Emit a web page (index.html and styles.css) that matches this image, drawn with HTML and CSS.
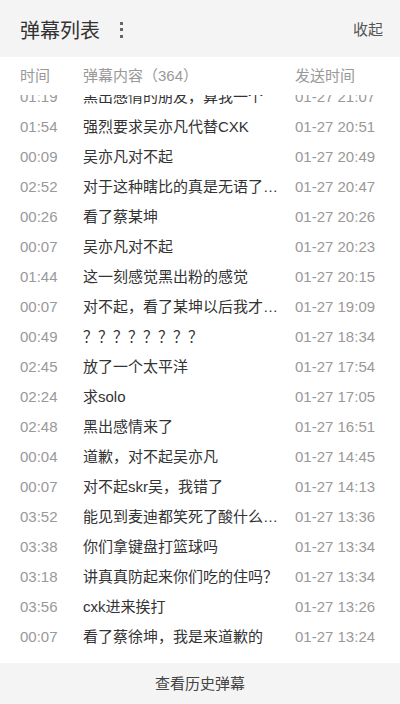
FILE: index.html
```html
<!DOCTYPE html>
<html lang="zh-CN">
<head>
  <meta charset="UTF-8" />
  <meta name="viewport" content="width=device-width, initial-scale=1.0"/>
  <title>弹幕列表</title>
  <link rel="stylesheet" href="styles.css">
</head>
<body>
  <div class="panel">
    <div class="panel-header">
      <div class="title-wrap">
        <span class="title">弹幕列表</span>
        <span class="more"><i></i><i></i><i></i></span>
      </div>
      <span class="fold">收起</span>
    </div>

    <div class="row head">
      <span>时间</span>
      <span class="text">弹幕内容（364）</span>
      <span>发送时间</span>
    </div>

    <div class="list" id="list">
      <div class="list-inner">
        <div class="row"><span class="time">01:19</span><span class="text">黑出感情的朋友，算我一个</span><span class="date">01-27 21:07</span></div>
        <div class="row"><span class="time">01:54</span><span class="text">强烈要求吴亦凡代替CXK</span><span class="date">01-27 20:51</span></div>
        <div class="row"><span class="time">00:09</span><span class="text">吴亦凡对不起</span><span class="date">01-27 20:49</span></div>
        <div class="row"><span class="time">02:52</span><span class="text">对于这种瞎比的真是无语了吧哈哈</span><span class="date">01-27 20:47</span></div>
        <div class="row"><span class="time">00:26</span><span class="text">看了蔡某坤</span><span class="date">01-27 20:26</span></div>
        <div class="row"><span class="time">00:07</span><span class="text">吴亦凡对不起</span><span class="date">01-27 20:23</span></div>
        <div class="row"><span class="time">01:44</span><span class="text">这一刻感觉黑出粉的感觉</span><span class="date">01-27 20:15</span></div>
        <div class="row"><span class="time">00:07</span><span class="text">对不起，看了某坤以后我才知道什么是真爱</span><span class="date">01-27 19:09</span></div>
        <div class="row"><span class="time">00:49</span><span class="text">？？？？？？？？</span><span class="date">01-27 18:34</span></div>
        <div class="row"><span class="time">02:45</span><span class="text">放了一个太平洋</span><span class="date">01-27 17:54</span></div>
        <div class="row"><span class="time">02:24</span><span class="text">求solo</span><span class="date">01-27 17:05</span></div>
        <div class="row"><span class="time">02:48</span><span class="text">黑出感情来了</span><span class="date">01-27 16:51</span></div>
        <div class="row"><span class="time">00:04</span><span class="text">道歉，对不起吴亦凡</span><span class="date">01-27 14:45</span></div>
        <div class="row"><span class="time">00:07</span><span class="text">对不起skr吴，我错了</span><span class="date">01-27 14:13</span></div>
        <div class="row"><span class="time">03:52</span><span class="text">能见到麦迪都笑死了酸什么呢各位</span><span class="date">01-27 13:36</span></div>
        <div class="row"><span class="time">03:38</span><span class="text">你们拿键盘打篮球吗</span><span class="date">01-27 13:34</span></div>
        <div class="row"><span class="time">03:18</span><span class="text">讲真真防起来你们吃的住吗？</span><span class="date">01-27 13:34</span></div>
        <div class="row"><span class="time">03:56</span><span class="text">cxk进来挨打</span><span class="date">01-27 13:26</span></div>
        <div class="row"><span class="time">00:07</span><span class="text">看了蔡徐坤，我是来道歉的</span><span class="date">01-27 13:24</span></div>
      </div>
    </div>

    <div class="panel-footer">查看历史弹幕</div>
  </div>

  <script>
    // scrolled to the end of the list
    const list = document.getElementById('list');
    list.scrollTop = list.scrollHeight;
  </script>
</body>
</html>
```

FILE: styles.css
```css
html, body {
  margin: 0;
  height: 100%;
}

body {
  font-family: "Liberation Sans", "Noto Sans CJK SC", sans-serif;
  background-color: #fff;
  color: #333;
  overflow: hidden;
}

.panel {
  display: flex;
  flex-direction: column;
  height: 100vh;
}

.panel-header {
  flex: 0 0 57px;
  display: flex;
  align-items: center;
  justify-content: space-between;
  padding: 0 17px 0 20px;
  background-color: #f4f4f4;
}

.title-wrap {
  display: flex;
  align-items: center;
  gap: 20px;
}

.title {
  font-size: 20px;
  color: #333;
  padding-top: 2px;
}

.more {
  display: flex;
  flex-direction: column;
  gap: 3.5px;
  padding-top: 2px;
}

.more i {
  display: block;
  width: 3px;
  height: 3px;
  background-color: #666;
}

.fold {
  font-size: 15px;
  color: #555;
}

.row {
  display: grid;
  grid-template-columns: 63px 212px 1fr;
  padding-left: 20px;
  height: 30px;
  line-height: 30px;
  font-size: 15px;
}

.row .text {
  padding-right: 12px;
  white-space: nowrap;
  overflow: hidden;
  text-overflow: ellipsis;
}

.row.head {
  flex: 0 0 38px;
  height: 38px;
  line-height: 38px;
  color: #999;
}

.list {
  flex: 1;
  min-height: 0;
  overflow: hidden;
}

.list-inner {
  padding-bottom: 11px;
}

.time,
.date {
  color: #999;
}

.text {
  color: #333;
}

.head .text {
  color: #999;
}

.panel-footer {
  flex: 0 0 41px;
  line-height: 41px;
  text-align: center;
  font-size: 15px;
  color: #444;
  background-color: #f4f4f4;
}
```
